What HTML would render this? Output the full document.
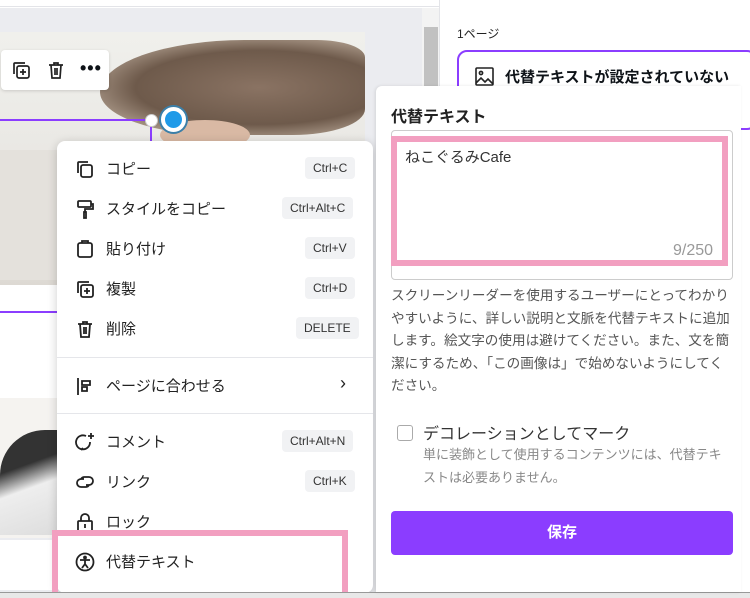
<!DOCTYPE html>
<html><head><meta charset="utf-8"><style>
*{margin:0;padding:0;box-sizing:border-box}
body{width:750px;height:598px;overflow:hidden;position:relative;background:#fff;font-family:"Liberation Sans","Noto Sans CJK JP",sans-serif;color:#0e1318}
.abs{position:absolute}
.mi{position:absolute;left:75px;display:flex;align-items:center;font-size:15px;color:#222}
.mi svg{width:20px;height:20px;margin-right:11px;fill:none;stroke:#222;stroke-width:1.8}
.kb{position:absolute;right:16px;background:#f1f2f4;border-radius:4px;font-size:12px;color:#333;padding:4px 8px}
</style></head><body>
<div class="abs" style="left:0;top:0;width:440px;height:7px;background:#fff;border-bottom:1px solid #e3e4e8"></div>
<div class="abs" style="left:0;top:8px;width:422px;height:590px;background:#ebecf0"></div>
<div class="abs" style="left:422px;top:8px;width:18px;height:590px;background:#f3f3f3"></div>
<div class="abs" style="left:424px;top:27px;width:14px;height:70px;background:#c1c1c1"></div>
<div class="abs" style="left:439px;top:0;width:1px;height:598px;background:#e3e4e8"></div>
<!-- top photo -->
<div class="abs" style="left:0;top:32px;width:365px;height:253px;background:linear-gradient(180deg,#f0f0ec,#e8e6e2 60%,#ddd9d3)"></div>
<div class="abs" style="left:100px;top:40px;width:265px;height:95px;border-radius:60% 20% 30% 50%;background:radial-gradient(ellipse at 60% 50%,#8a7363,#6e5a4b 55%,#b9a898 85%,transparent 100%)"></div>
<div class="abs" style="left:160px;top:120px;width:90px;height:30px;border-radius:50%;background:#d9b9a4"></div>
<div class="abs" style="left:0;top:150px;width:57px;height:130px;background:#e4e1dc"></div>
<div class="abs" style="left:0;top:285px;width:365px;height:120px;background:#fff"></div>
<div class="abs" style="left:0;top:311px;width:57px;height:2px;background:#8b3dff"></div>
<div class="abs" style="left:0;top:398px;width:57px;height:140px;background:#f5f3f0"></div>
<div class="abs" style="left:0;top:430px;width:57px;height:105px;border-radius:45px 0 0 0;background:linear-gradient(160deg,#333 0 35%,#eee 55%,#ddd)"></div>
<div class="abs" style="left:0;top:540px;width:57px;height:50px;background:#fff"></div>
<!-- toolbar -->
<div class="abs" style="left:1px;top:50px;width:108px;height:40px;background:#fff;border-radius:4px;box-shadow:0 1px 3px rgba(0,0,0,.15)"></div>
<svg class="abs" style="left:11px;top:60px" width="20" height="20" fill="none" stroke="#222" stroke-width="1.7"><rect x="6" y="6" width="12" height="12" rx="2"/><path d="M3 14V4a1 1 0 011-1h10M12 9v6M9 12h6"/></svg>
<svg class="abs" style="left:46px;top:60px" width="20" height="20" fill="none" stroke="#222" stroke-width="1.7"><path d="M3 5h14M8 5V3h4v2M5 5l1 13h8l1-13M9 8v7M11 8v7"/></svg>
<div class="abs" style="left:80px;top:58px;font-size:18px;font-weight:bold;letter-spacing:1px">•••</div>
<div class="abs" style="left:0;top:119px;width:150px;height:2px;background:#8b3dff"></div>
<div class="abs" style="left:150px;top:120px;width:2px;height:25px;background:#8b3dff"></div>
<div class="abs" style="left:145px;top:114px;width:13px;height:13px;border-radius:50%;background:#fff;border:1px solid #ccc"></div>
<div class="abs" style="left:161px;top:107px;width:25px;height:25px;border-radius:50%;background:#1f9ae8;border:4px solid #fff;box-shadow:0 0 0 2px #3b7fa8"></div>
<!-- context menu -->
<div class="abs" style="left:57px;top:141px;width:316px;height:452px;background:#fff;border-radius:8px;box-shadow:0 2px 10px rgba(0,0,0,.2)">
<div class="abs" style="left:0;top:216px;width:316px;height:1px;background:#e5e6ea"></div>
<div class="abs" style="left:0;top:272px;width:316px;height:1px;background:#e5e6ea"></div>
</div>
<div class="mi" style="top:158px"><svg><rect x="6" y="6" width="11" height="12" rx="2"/><path d="M3 14V4a1 1 0 011-1h9"/></svg>コピー</div>
<div class="kb" style="left:305px;top:157px;right:auto">Ctrl+C</div>
<div class="mi" style="top:198px"><svg><rect x="3" y="2" width="13" height="6" rx="1"/><path d="M16 5h2v5H10v3M9 13h2v6H9z"/></svg>スタイルをコピー</div>
<div class="kb" style="left:282px;top:197px;right:auto">Ctrl+Alt+C</div>
<div class="mi" style="top:238px"><svg><rect x="3" y="4" width="14" height="14" rx="2"/><path d="M7 4V2h6v2"/></svg>貼り付け</div>
<div class="kb" style="left:305px;top:237px;right:auto">Ctrl+V</div>
<div class="mi" style="top:278px"><svg><rect x="6" y="6" width="12" height="12" rx="2"/><path d="M3 14V4a1 1 0 011-1h10M12 9v6M9 12h6"/></svg>複製</div>
<div class="kb" style="left:305px;top:277px;right:auto">Ctrl+D</div>
<div class="mi" style="top:318px"><svg><path d="M3 5h14M8 5V3h4v2M5 5l1 13h8l1-13M9 8v7M11 8v7"/></svg>削除</div>
<div class="kb" style="left:296px;top:317px;right:auto">DELETE</div>
<div class="mi" style="top:375px"><svg><path d="M3 2v17M7 5h8v4H7zM7 11h5v4H7z"/></svg>ページに合わせる</div>
<div class="abs" style="left:340px;top:373px;font-size:18px;color:#222">›</div>
<div class="mi" style="top:431px"><svg><path d="M15 10a7 7 0 11-4-6M6 18l2-2M16 1v6M13 4h6"/></svg>コメント</div>
<div class="kb" style="left:282px;top:430px;right:auto">Ctrl+Alt+N</div>
<div class="mi" style="top:471px"><svg><path d="M9 7H6a4 4 0 000 8h5a4 4 0 003-2M11 13h3a4 4 0 000-8H9a4 4 0 00-3 2"/></svg>リンク</div>
<div class="kb" style="left:305px;top:470px;right:auto">Ctrl+K</div>
<div class="mi" style="top:511px"><svg><rect x="3" y="9" width="14" height="10" rx="1"/><path d="M6 9V6a4 4 0 018 0v3M10 12v4"/></svg>ロック</div>
<div class="mi" style="top:551px"><svg><circle cx="10" cy="10" r="8.5"/><circle cx="10" cy="5.5" r="1" fill="#222"/><path d="M5 8h10M10 8v4l-3 4M10 12l3 4"/></svg>代替テキスト</div>
<div class="abs" style="left:52px;top:530px;width:296px;height:68px;border:6px solid #f29fc0"></div>
<!-- right panel -->
<div class="abs" style="left:457px;top:25px;font-size:12px;color:#222">1ページ</div>
<div class="abs" style="left:457px;top:50px;width:300px;height:80px;border:2px solid #8b3dff;border-radius:10px"></div>
<svg class="abs" style="left:475px;top:67px" width="19" height="19" fill="none" stroke="#222" stroke-width="1.6"><rect x="1" y="1" width="17" height="17" rx="1"/><circle cx="6" cy="6" r="1.6"/><path d="M1 16l5-5 4 4 3-3 5 5"/></svg>
<div class="abs" style="left:505px;top:66px;font-size:15px;font-weight:bold">代替テキストが設定されていない</div>
<svg class="abs" style="left:475px;top:573px" width="19" height="19" fill="none" stroke="#222" stroke-width="1.6"><rect x="1" y="1" width="17" height="17" rx="1"/><circle cx="6" cy="6" r="1.6"/><path d="M1 16l5-5 4 4 3-3 5 5"/></svg>
<div class="abs" style="left:505px;top:572px;font-size:15px;font-weight:bold">代替テキストが設定されていない</div>
<div class="abs" style="left:406px;top:566px;width:20px;height:20px;border:1.6px solid #222;border-radius:50%;font-size:12px;font-weight:bold;text-align:center;line-height:17px">?</div>
<div class="abs" style="left:0;top:592px;width:750px;height:6px;background:#e8e8e8;border-top:1px solid #999"></div>
<!-- alt text popup -->
<div class="abs" style="left:376px;top:86px;width:365px;height:506px;background:#fff;border-radius:6px 0 0 0;box-shadow:-1px 0 3px rgba(0,0,0,.1)">
<div class="abs" style="left:15px;top:17px;font-size:16px;font-weight:bold;color:#222">代替テキスト</div>
<div class="abs" style="left:15px;top:44px;width:342px;height:150px;border:1px solid #ccc;border-radius:4px"></div>
<div class="abs" style="left:15px;top:50px;width:337px;height:130px;border:6px solid #f29fc0"></div>
<div class="abs" style="left:29px;top:60px;font-size:15px;color:#333">ねこぐるみCafe</div>
<div class="abs" style="left:297px;top:156px;font-size:16px;color:#999">9/250</div>
<div class="abs" style="left:15px;top:199px;width:345px;font-size:13.6px;line-height:22.5px;color:#555">スクリーンリーダーを使用するユーザーにとってわかりやすいように、詳しい説明と文脈を代替テキストに追加します。絵文字の使用は避けてください。また、文を簡潔にするため、「この画像は」で始めないようにしてください。</div>
<div class="abs" style="left:21px;top:339px;width:16px;height:16px;border:1.5px solid #aaa;border-radius:3px"></div>
<div class="abs" style="left:47px;top:334px;font-size:16px;color:#333">デコレーションとしてマーク</div>
<div class="abs" style="left:47px;top:358px;width:305px;font-size:13px;line-height:22.5px;color:#888">単に装飾として使用するコンテンツには、代替テキストは必要ありません。</div>
<div class="abs" style="left:15px;top:425px;width:342px;height:44px;background:#8b3dff;border-radius:4px;color:#fff;font-weight:bold;font-size:15px;text-align:center;line-height:44px">保存</div>
</div>
</body></html>
